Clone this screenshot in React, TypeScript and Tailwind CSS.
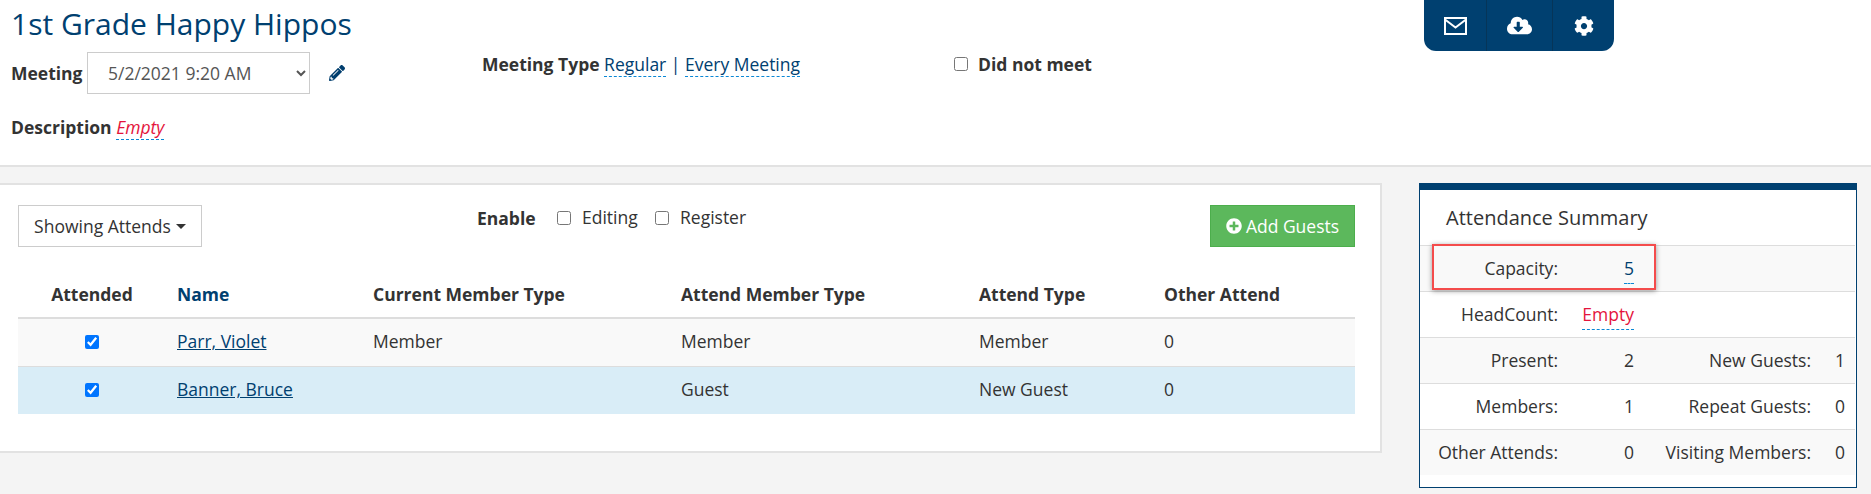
import { FaCloudDownloadAlt, FaCog, FaPencilAlt, FaPlusCircle } from 'react-icons/fa';

const columns = [
  { title: 'Attended', width: 'w-[148px]', center: true },
  { title: 'Name', width: 'w-[196px]', link: true },
  { title: 'Current Member Type', width: 'w-[308px]' },
  { title: 'Attend Member Type', width: 'w-[298px]' },
  { title: 'Attend Type', width: 'w-[185px]' },
  { title: 'Other Attend', width: 'w-[202px]' },
];

const attendees = [
  { name: 'Parr, Violet', current: 'Member', attendMember: 'Member', attendType: 'Member', other: '0', rowClass: 'bg-[#f9f9f9]' },
  { name: 'Banner, Bruce', current: '', attendMember: 'Guest', attendType: 'New Guest', other: '0', rowClass: 'bg-[#d9edf7]' },
];

function Editable({ children, empty }: { children: React.ReactNode; empty?: boolean }) {
  return (
    <span className={`border-b border-dashed border-[#0a88d6] ${empty ? 'text-[#e4143c]' : 'text-[#004070]'}`}>
      {children}
    </span>
  );
}

function SummaryRow({ cells, shaded }: { cells: React.ReactNode[]; shaded?: boolean }) {
  return (
    <div
      className={`grid h-[46px] grid-cols-[138px_76px_177px_34px_1fr] items-center border-t border-[#ddd] leading-none ${
        shaded ? 'bg-[#f9f9f9]' : 'bg-white'
      }`}
    >
      {cells.map((cell, i) => (
        <div key={i} className="text-right whitespace-nowrap">
          {cell}
        </div>
      ))}
    </div>
  );
}

export default function App() {
  return (
    <div className="h-[494px] overflow-hidden bg-[#f4f4f4] font-['Open_Sans',sans-serif] text-[17.5px] text-[#333]">
      <header className="flex h-[167px] border-b-2 border-[#e2e2e2] bg-white">
        <div className="w-[482px] pl-[11px]">
          <h1 className="h-[52px] pt-[3px] text-[30px] leading-[42px] whitespace-nowrap text-[#004070]">1st Grade Happy Hippos</h1>
          <div className="flex h-[42px] items-center">
            <label className="w-[76px] font-bold">Meeting</label>
            <select className="h-[42px] w-[223px] rounded-none border border-[#ccc] bg-white pl-[16px] text-[17.5px] text-[#555]">
              <option>5/2/2021 9:20 AM</option>
            </select>
            <FaPencilAlt className="ml-[19px] text-[16px] text-[#003e6e]" />
          </div>
          <p className="mt-[21px] whitespace-nowrap leading-[24px]">
            <span className="font-bold">Description</span>{' '}
            <span className="italic">
              <Editable empty>Empty</Editable>
            </span>
          </p>
        </div>
        <div className="w-[472px] pt-[51px] leading-[26px] whitespace-nowrap">
          <span className="font-bold">Meeting Type</span> <Editable>Regular</Editable>{' '}
          <span className="text-[#004070]">|</span> <Editable>Every Meeting</Editable>
        </div>
        <div className="w-[470px] pt-[51px]">
          <label className="flex h-[26px] items-center gap-[10px] font-bold">
            <input type="checkbox" className="m-0 h-[14px] w-[14px]" />
            Did not meet
          </label>
        </div>
        <div className="flex h-[51px] w-[190px] rounded-b-[12px] bg-[#004070] text-white">
          <div className="flex w-[63px] items-center justify-center border-r border-[#063558]">
            <svg width="23" height="18" viewBox="0 0 23 18" fill="none" stroke="currentColor" strokeWidth="2">
              <rect x="1" y="1" width="21" height="16" />
              <path d="M1 2.5l10.5 8L22 2.5" />
            </svg>
          </div>
          <div className="flex w-[66px] items-center justify-center border-r border-[#063558] text-[25px]">
            <FaCloudDownloadAlt />
          </div>
          <div className="flex flex-1 items-center justify-center text-[20px]">
            <FaCog />
          </div>
        </div>
      </header>

      <main className="flex items-start pt-[16px]">
        <section className="h-[270px] w-[1382px] border-y-2 border-r-2 border-[#e2e2e2] bg-white pt-[20px] pr-[25px] pl-[18px]">
          <div className="flex h-[42px] items-start">
            <button className="flex h-[42px] w-[184px] items-center justify-center border border-[#ccc] bg-white whitespace-nowrap text-[#333]">
              Showing Attends
              <span className="ml-[5px] border-x-[5px] border-t-[5px] border-x-transparent border-t-[#333]" />
            </button>
            <div className="ml-[275px] flex h-[26px] items-center whitespace-nowrap">
              <span className="w-[80px] font-bold">Enable</span>
              <label className="flex w-[98px] items-center gap-[11px]">
                <input type="checkbox" className="m-0 h-[14px] w-[14px]" />
                <span className="-translate-y-[1px]">Editing</span>
              </label>
              <label className="flex items-center gap-[11px]">
                <input type="checkbox" className="m-0 h-[14px] w-[14px]" />
                <span className="-translate-y-[1px]">Register</span>
              </label>
            </div>
            <button className="ml-auto flex h-[42px] w-[145px] items-center justify-center gap-[4px] border border-[#4cae4c] bg-[#5cb85c] whitespace-nowrap text-white">
              <FaPlusCircle className="text-[16px]" />
              Add Guests
            </button>
          </div>

          <table className="mt-[26px] w-[1337px] table-fixed border-collapse">
            <thead>
              <tr className="h-[45px] border-b-2 border-[#ddd]">
                {columns.map(col => (
                  <th
                    key={col.title}
                    className={`${col.width} pb-[1px] font-bold whitespace-nowrap ${col.center ? 'text-center' : 'pl-[11px] text-left'} ${
                      col.link ? 'text-[#004070]' : ''
                    }`}
                  >
                    {col.title}
                  </th>
                ))}
              </tr>
            </thead>
            <tbody>
              {attendees.map(row => (
                <tr key={row.name} className={`h-[48px] border-b border-[#ddd] last:border-b-0 ${row.rowClass}`}>
                  <td className="pb-[4px] text-center">
                    <input type="checkbox" defaultChecked className="m-0 h-[14px] w-[14px] align-middle" />
                  </td>
                  <td className="pb-[2px] pl-[11px]">
                    <span className="text-[#004070] underline">{row.name}</span>
                  </td>
                  <td className="pb-[2px] pl-[11px]">{row.current}</td>
                  <td className="pb-[2px] pl-[11px]">{row.attendMember}</td>
                  <td className="pb-[2px] pl-[11px]">{row.attendType}</td>
                  <td className="pb-[2px] pl-[11px]">{row.other}</td>
                </tr>
              ))}
            </tbody>
          </table>
        </section>

        <aside className="relative ml-[37px] h-[305px] w-[438px] border border-t-[7px] border-[#004070] bg-white pr-[1px]">
          <h2 className="h-[55px] pt-[14px] pl-[26px] text-[20px] leading-[28px]">Attendance Summary</h2>
          <SummaryRow
            shaded
            cells={[
              'Capacity:',
              <span className="border-b border-dashed border-[#0a88d6] pb-[3px] text-[#004070]">5</span>,
              '',
              '',
            ]}
          />
          <SummaryRow
            cells={[
              'HeadCount:',
              <span className="border-b border-dashed border-[#0a88d6] pb-[3px] text-[#e4143c]">Empty</span>,
              '',
              '',
            ]}
          />
          <SummaryRow shaded cells={['Present:', '2', 'New Guests:', '1']} />
          <SummaryRow cells={['Members:', '1', 'Repeat Guests:', '0']} />
          <SummaryRow shaded cells={['Other Attends:', '0', 'Visiting Members:', '0']} />
          <div className="absolute top-[54px] left-[12px] h-[46px] w-[224px] border-2 border-[#f44c4c] shadow-[0_1px_5px_rgba(0,0,0,0.4)]" />
        </aside>
      </main>
    </div>
  );
}
